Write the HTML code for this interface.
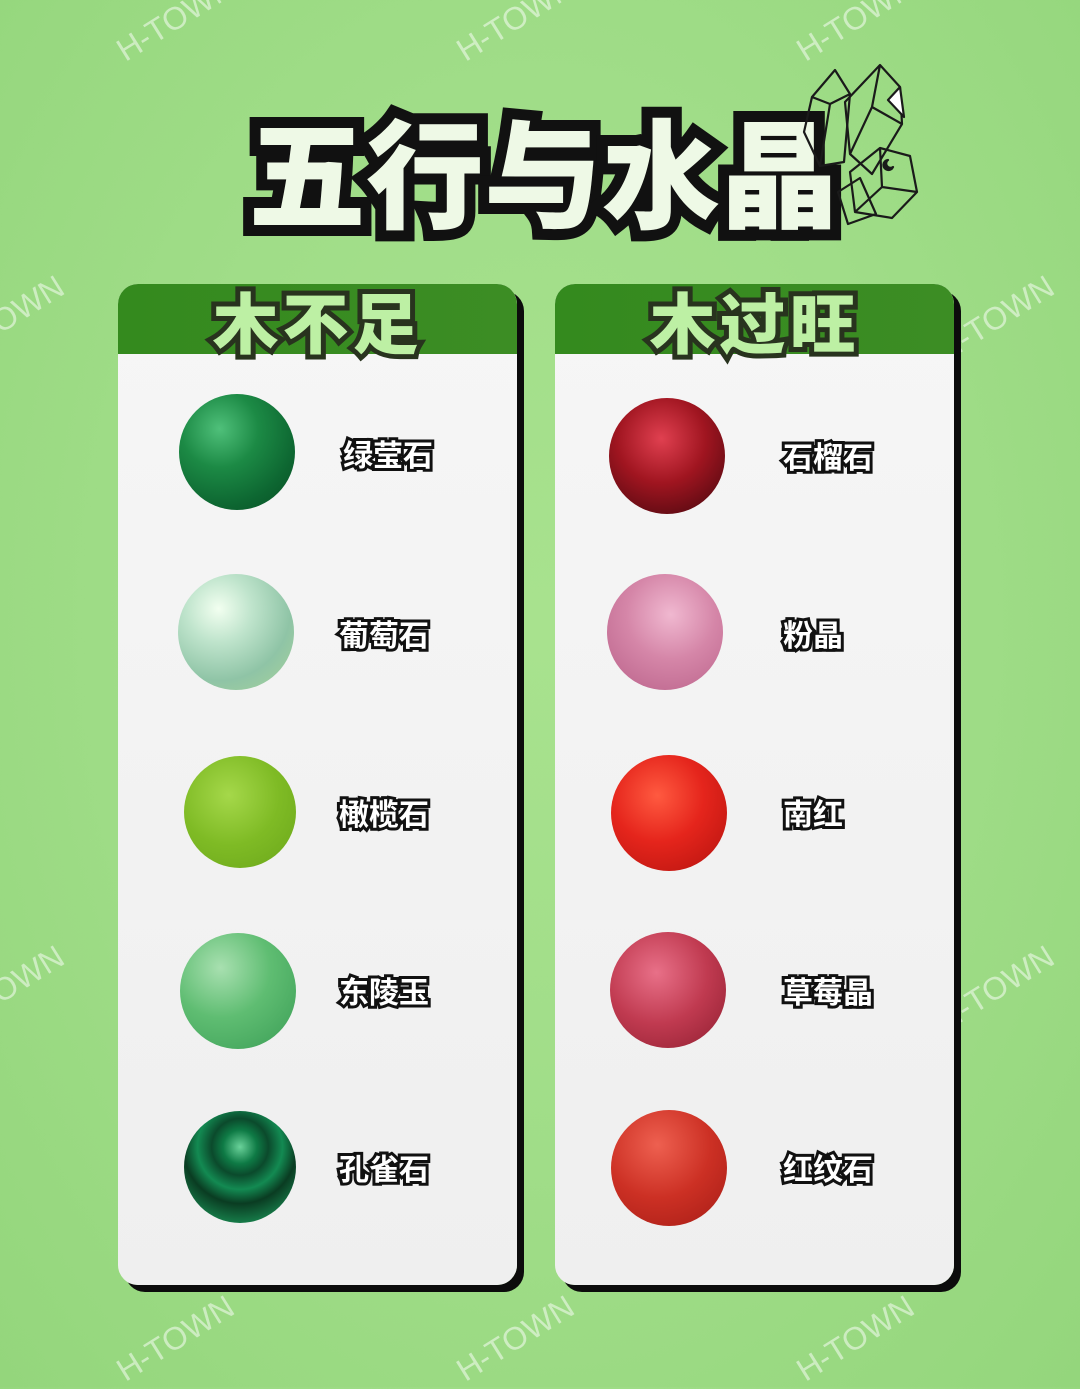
<!DOCTYPE html>
<html><head><meta charset="utf-8"><style>
*{margin:0;padding:0;box-sizing:border-box}
body{width:1080px;height:1387px;overflow:hidden;background:radial-gradient(ellipse at 50% 45%,#a8e28e 0%,#a0dd88 50%,#94d67c 100%);position:relative;font-family:"Liberation Sans","Noto Sans CJK SC",sans-serif}
.title{position:absolute;left:248px;top:98px;width:620px;height:140px;font-family:"Noto Sans CJK SC",sans-serif;font-weight:900;font-size:118px;line-height:140px;letter-spacing:0px;color:#eef9e6;-webkit-text-stroke:22px #111;paint-order:stroke fill;white-space:nowrap}
.card{position:absolute;top:284px;width:399px;height:1001px;background:linear-gradient(180deg,#f6f6f6,#efefef);border-radius:20px;box-shadow:7px 7px 0 #0c0c0c;overflow:hidden}
.hd{height:70px;background:linear-gradient(90deg,#348a1e,#3c8d24);text-align:center;font-family:"Noto Sans CJK SC",sans-serif;font-weight:900;font-size:66px;line-height:72px;color:#bdf0a4;-webkit-text-stroke:10px #28331e;paint-order:stroke fill;letter-spacing:4px}
.ball{position:absolute;width:116px;height:116px;border-radius:50%}
.lb{position:absolute;font-family:"Noto Sans CJK SC",sans-serif;font-weight:700;font-size:30px;color:#fff;-webkit-text-stroke:6px #111;paint-order:stroke fill;line-height:36px;white-space:nowrap}
.wm{position:absolute;color:rgba(255,255,255,.5);font-size:32px;transform:rotate(-32deg);white-space:nowrap;font-family:"Liberation Sans",sans-serif}
</style></head><body>
<div class="wm" style="left:110px;top:0px">H-TOWN</div>
<div class="wm" style="left:450px;top:0px">H-TOWN</div>
<div class="wm" style="left:790px;top:0px">H-TOWN</div>
<div class="wm" style="left:-60px;top:300px">H-TOWN</div>
<div class="wm" style="left:-60px;top:970px">H-TOWN</div>
<div class="wm" style="left:930px;top:300px">H-TOWN</div>
<div class="wm" style="left:930px;top:970px">H-TOWN</div>
<div class="wm" style="left:110px;top:1320px">H-TOWN</div>
<div class="wm" style="left:450px;top:1320px">H-TOWN</div>
<div class="wm" style="left:790px;top:1320px">H-TOWN</div>

<div class="title">五行与水晶</div>
<svg style="position:absolute;left:800px;top:62px" width="120" height="165" viewBox="0 0 120 165" fill="none" stroke="#1a1a1a" stroke-width="2.2" stroke-linejoin="round">
<path d="M12 35 L35 8 L50 32 L44 100 L20 104 L4 70 Z M12 35 L30 42 L50 32 M30 42 L20 104"/>
<path d="M45 40 L80 3 L100 25 L102 62 L72 112 L50 92 Z M80 3 L72 45 L102 62 M72 45 L50 92"/>
<path d="M88 38 L100 25 L104 55 Z" fill="#fff"/>
<path d="M50 110 L80 86 L110 94 L117 130 L92 156 L55 150 Z M80 86 L82 125 L117 130 M82 125 L55 150"/>
<path d="M38 130 L60 116 L76 152 L48 162 Z"/>
<path d="M88 98 a5 5 0 1 0 5 7 a4 4 0 1 1 -5 -7z" fill="#1a1a1a"/>
</svg>

<div class="card" style="left:118px"><div class="hd">木不足</div></div>
<div class="card" style="left:555px"><div class="hd">木过旺</div></div>

<div class="ball" style="left:179px;top:394px;background:radial-gradient(circle at 35% 30%,#4fc07a 0%,#1c8a45 35%,#0d6631 70%,#0a4d24 100%)"></div>
<div class="ball" style="left:178px;top:574px;background:radial-gradient(circle at 35% 30%,#f2fff0 0%,#bfe4cc 30%,#8fc4a6 65%,#a9d49a 100%)"></div>
<div class="ball" style="left:184px;top:756px;width:112px;height:112px;background:radial-gradient(circle at 40% 35%,#a5d84a 0%,#7fbb25 50%,#6aa61a 100%)"></div>
<div class="ball" style="left:180px;top:933px;background:radial-gradient(circle at 35% 30%,#a8e0b0 0%,#5fbd72 45%,#3a9d55 100%)"></div>
<div class="ball" style="left:184px;top:1111px;width:112px;height:112px;background:radial-gradient(circle at 50% 32%,#6ad29a 0%,#0e7a45 18%,#0b4a2c 30%,#138a52 45%,#0a3c22 60%,#167a48 80%,#0a3a20 100%)"></div>

<div class="ball" style="left:609px;top:398px;background:radial-gradient(circle at 45% 35%,#e04050 0%,#a01520 45%,#5a0a12 85%,#3a0608 100%)"></div>
<div class="ball" style="left:607px;top:574px;background:radial-gradient(circle at 55% 35%,#f0b8d0 0%,#d586a8 45%,#b86088 100%)"></div>
<div class="ball" style="left:611px;top:755px;background:radial-gradient(circle at 40% 35%,#ff5a40 0%,#e5251c 45%,#b3120e 100%)"></div>
<div class="ball" style="left:610px;top:932px;background:radial-gradient(circle at 40% 35%,#e87088 0%,#c03a50 50%,#8e1e30 100%)"></div>
<div class="ball" style="left:611px;top:1110px;background:radial-gradient(circle at 40% 30%,#ee6050 0%,#cc3024 50%,#a51c16 100%)"></div>

<div class="lb" style="left:343px;top:435px">绿莹石</div>
<div class="lb" style="left:339px;top:615px">葡萄石</div>
<div class="lb" style="left:339px;top:794px">橄榄石</div>
<div class="lb" style="left:339px;top:972px">东陵玉</div>
<div class="lb" style="left:339px;top:1149px">孔雀石</div>
<div class="lb" style="left:783px;top:437px">石榴石</div>
<div class="lb" style="left:783px;top:615px">粉晶</div>
<div class="lb" style="left:783px;top:794px">南红</div>
<div class="lb" style="left:783px;top:972px">草莓晶</div>
<div class="lb" style="left:783px;top:1149px">红纹石</div>
</body></html>
